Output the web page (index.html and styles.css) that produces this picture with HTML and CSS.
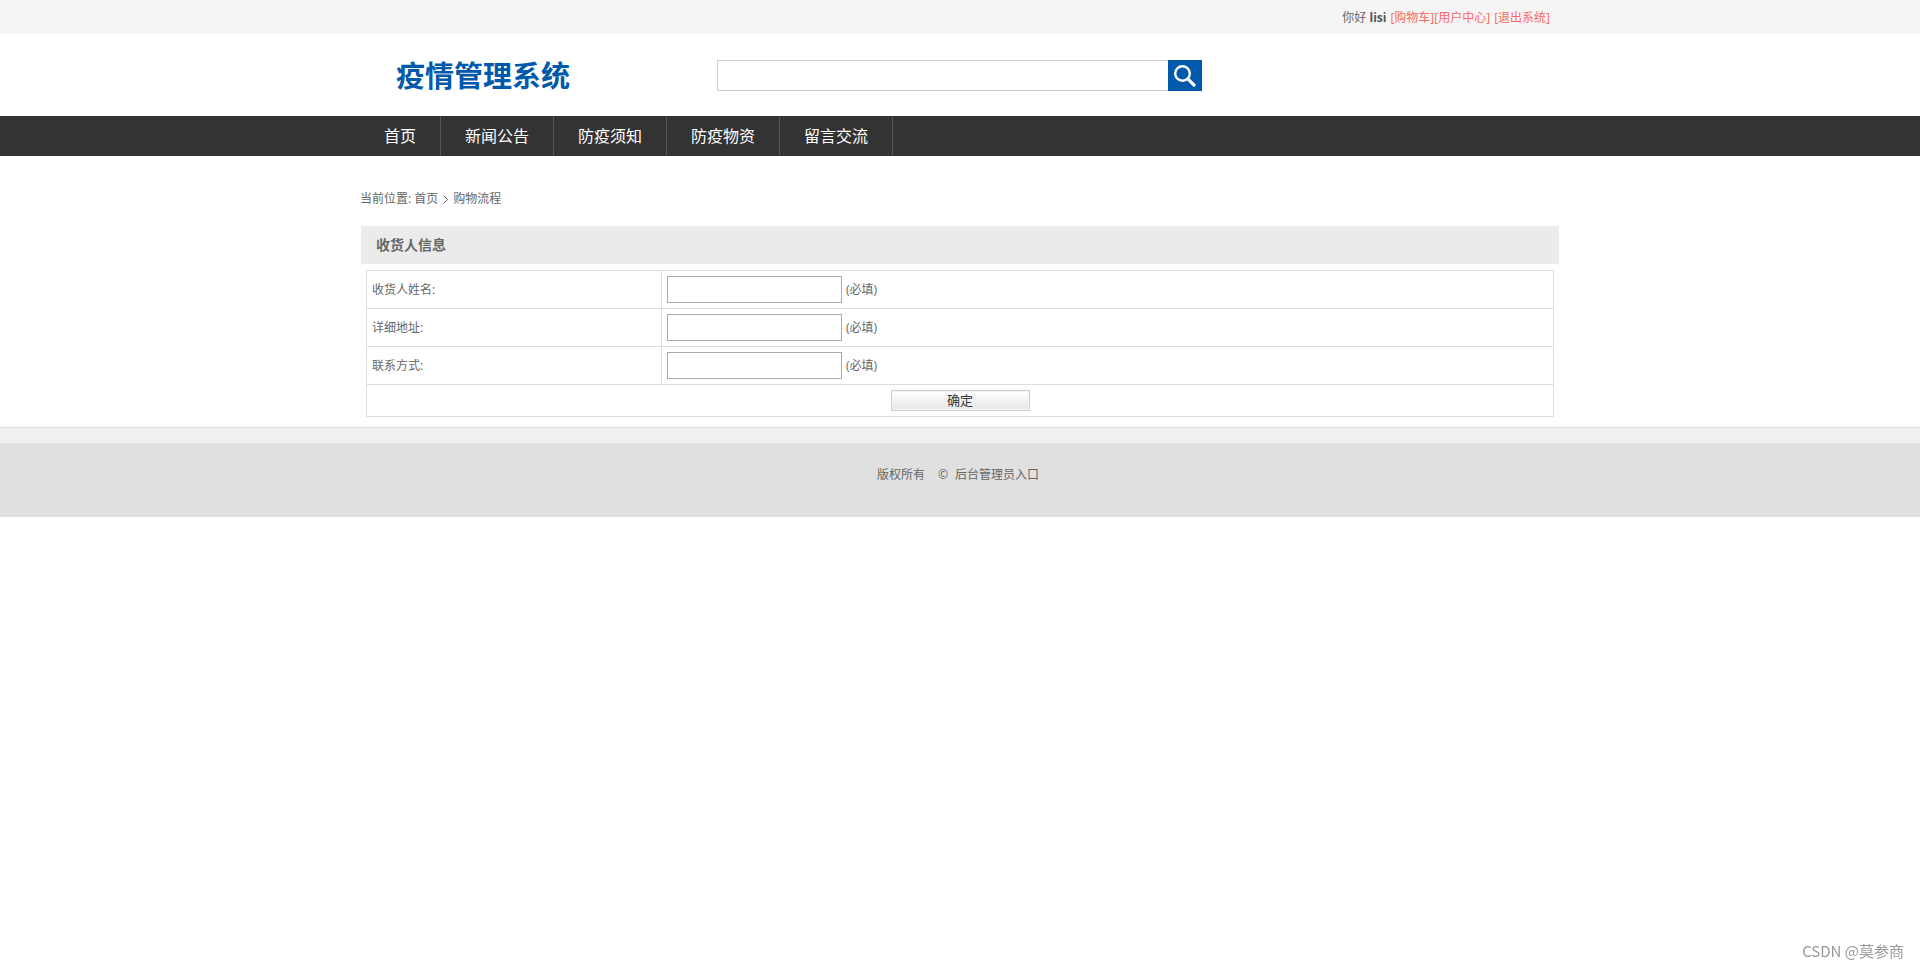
FILE: index.html
```html
<!DOCTYPE html>
<html lang="zh-CN">
<head>
<meta charset="utf-8">
<title>疫情管理系统</title>
<link rel="stylesheet" href="styles.css">
</head>
<body>
<div class="topbar">
  <div class="container topbar-inner">
    <span>你好 <b>lisi</b></span>
    <span class="topbar-links"><a href="#">[购物车]</a><a href="#">[用户中心]</a></span>
    <a href="#">[退出系统]</a>
  </div>
</div>
<header class="container header">
  <h1 class="logo">疫情管理系统</h1>
  <form class="search">
    <input class="search-input" type="text" aria-label="搜索">
    <button class="search-button" type="button" aria-label="搜索">
      <svg width="22" height="22" viewBox="0 0 22 22" fill="none" stroke="#fff"><circle cx="8.500" cy="8.500" r="7.300" stroke-width="2.400"/><path d="M13.800 13.800L20 20" stroke-width="3.200" stroke-linecap="round"/></svg>
    </button>
  </form>
</header>
<nav class="nav">
  <div class="container nav-inner">
    <a href="#">首页</a>
    <a href="#">新闻公告</a>
    <a href="#">防疫须知</a>
    <a href="#">防疫物资</a>
    <a href="#">留言交流</a>
  </div>
</nav>
<main class="container">
  <div class="crumbs">
    <span>当前位置: <a href="#">首页</a></span>
    <svg width="5" height="9" viewBox="0 0 5 9" fill="none" stroke="#666"><path d="M0.500 0.500L4.500 4.500L0.500 8.500"/></svg>
    <span class="crumb-current">购物流程</span>
  </div>
  <form class="panel">
    <h2 class="panel-title">收货人信息</h2>
    <table class="form-table">
      <tr>
        <td class="label-cell"><label for="name">收货人姓名:</label></td>
        <td><div class="field"><input id="name" type="text"><span>(必填)</span></div></td>
      </tr>
      <tr>
        <td class="label-cell"><label for="address">详细地址:</label></td>
        <td><div class="field"><input id="address" type="text"><span>(必填)</span></div></td>
      </tr>
      <tr>
        <td class="label-cell"><label for="contact">联系方式:</label></td>
        <td><div class="field"><input id="contact" type="text"><span>(必填)</span></div></td>
      </tr>
      <tr>
        <td colspan="2"><button class="submit" type="button">确定</button></td>
      </tr>
    </table>
  </form>
</main>
<footer class="footer">
  <div class="footer-inner">
    <span>版权所有</span><span class="copy">©</span><a href="#">后台管理员入口</a>
  </div>
</footer>
<div class="watermark">CSDN @莫参商</div>
</body>
</html>
```
FILE: styles.css
```css
* {
  box-sizing: border-box;
}

body {
  margin: 0;
  background: #fff;
  color: #666;
  font: 12px/20px "Open Sans", "Noto Sans CJK SC", sans-serif;
}

a {
  color: inherit;
  text-decoration: none;
}

input,
button {
  margin: 0;
  padding: 0;
  font: inherit;
}

.container {
  width: 100%;
  max-width: 1200px;
  margin: 0 auto;
}

.topbar {
  background: #f5f5f5;
}

.topbar-inner {
  display: flex;
  justify-content: flex-end;
  gap: 4px;
  padding: 8px 10px 6px;
}

.topbar a {
  color: #f66;
}

.topbar b {
  color: #555;
}

.header {
  display: flex;
  padding: 26px 0 25px 36px;
}

.logo {
  flex: 0 0 321px;
  margin: 0;
  color: #0059ab;
  font-size: 29px;
  line-height: 31px;
  white-space: nowrap;
}

.search {
  display: flex;
  flex: 0 1 485px;
}

.search-input {
  flex: 1;
  min-width: 0;
  height: 31px;
  padding: 0 8px;
  border: 1px solid #ccc;
  border-right: 0;
}

.search-button {
  display: flex;
  align-items: center;
  justify-content: center;
  width: 34px;
  height: 31px;
  border: 0;
  background: #0059ab;
}

.nav {
  background: #333;
}

.nav-inner {
  display: flex;
}

.nav a {
  padding: 0 24px;
  border-right: 1px solid #555;
  color: #fff;
  font-size: 16px;
  line-height: 40px;
}

.crumbs {
  display: flex;
  align-items: center;
  gap: 5px;
  padding: 33px 0 17px;
}

.panel {
  padding: 0 1px;
}

.panel-title {
  margin: 0;
  padding: 0 15px;
  background: #ebebeb;
  font-size: 14px;
  line-height: 38px;
}

.form-table {
  width: calc(100% - 10px);
  margin: 6px 5px 10px;
  border-collapse: collapse;
}

.form-table td {
  padding: 5px;
  border: 1px solid #ddd;
}

.form-table .label-cell {
  width: 295px;
}

.field {
  display: flex;
  align-items: center;
  gap: 4px;
}

.field input {
  width: 175px;
  height: 27px;
  padding: 0 4px;
  border: 1px solid #aaa;
}

.submit {
  display: block;
  width: 139px;
  height: 21px;
  margin: 0 auto;
  border: 1px solid #ccc;
  background: linear-gradient(#fff, #e6e6e6);
  box-shadow: inset 0 0 0 1px #f6f6f6;
  color: #333;
  font-size: 13px;
  line-height: 19px;
}

.footer {
  padding-top: 15px;
  border-top: 1px solid #ddd;
  background: #f1f1f1;
}

.footer-inner {
  display: flex;
  justify-content: center;
  padding: 22px 4px 32px 0;
  background: #e0e0e0;
}

.copy {
  margin: 0 7px 0 13px;
}

.watermark {
  position: fixed;
  right: 16px;
  bottom: 8px;
  color: #999;
  font-family: "Noto Sans CJK SC", sans-serif;
  font-size: 15px;
}
```
